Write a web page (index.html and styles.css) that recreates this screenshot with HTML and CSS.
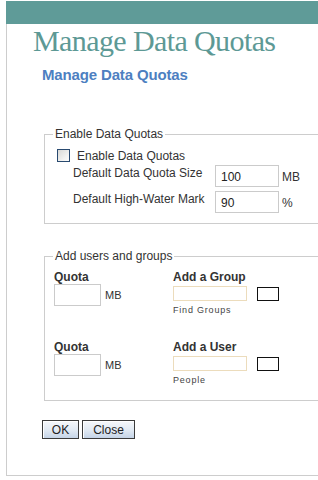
FILE: index.html
```html
<!DOCTYPE html>
<html>
<head>
  <meta charset="utf-8">
  <link rel="stylesheet" href="styles.css">
</head>
<body>
  <div class="topbar"></div>
  <div class="frame">
    <h1 class="page-title">Manage Data Quotas</h1>
    <h2 class="sub-title">Manage Data Quotas</h2>

    <fieldset class="group">
      <legend>Enable Data Quotas</legend>
      <div class="check-row">
        <span class="check"></span>
        <span>Enable Data Quotas</span>
      </div>
      <div class="quota-grid">
        <div class="field-label">Default Data Quota Size</div>
        <div class="text-box">100</div>
        <div class="unit">MB</div>
        <div class="field-label">Default High-Water Mark</div>
        <div class="text-box">90</div>
        <div class="unit">%</div>
      </div>
    </fieldset>

    <fieldset class="group users">
      <legend>Add users and groups</legend>
      <div class="user-row">
        <div class="quota-block">
          <div class="bold-label">Quota</div>
          <div class="quota-line">
            <span class="quota-box"></span>
            <span class="unit-inline">MB</span>
          </div>
        </div>
        <div class="add-block">
          <div class="bold-label">Add a Group</div>
          <div class="find-line">
            <span class="find-box"></span>
            <span class="pick-btn"></span>
          </div>
          <div class="hint">Find Groups</div>
        </div>
      </div>
      <div class="user-row">
        <div class="quota-block">
          <div class="bold-label">Quota</div>
          <div class="quota-line">
            <span class="quota-box"></span>
            <span class="unit-inline">MB</span>
          </div>
        </div>
        <div class="add-block">
          <div class="bold-label">Add a User</div>
          <div class="find-line">
            <span class="find-box"></span>
            <span class="pick-btn"></span>
          </div>
          <div class="hint">People</div>
        </div>
      </div>
    </fieldset>

    <div class="actions">
      <button class="btn btn-ok">OK</button>
      <button class="btn btn-close">Close</button>
    </div>
  </div>
</body>
</html>
```

FILE: styles.css
```css
* {
  box-sizing: border-box;
}

body {
  margin: 0;
  width: 318px;
  height: 480px;
  overflow: hidden;
  background: #fff;
  font-family: "Liberation Sans", Arial, sans-serif;
  font-size: 12px;
  color: #333;
}

.topbar {
  margin: 1px 0 0 6px;
  height: 23px;
  background: #5f9b98;
}

.frame {
  margin-left: 6px;
  height: 452px;
  border-left: 1px solid #cdcdcd;
  border-bottom: 1px solid #cdcdcd;
  overflow: hidden;
}

.page-title {
  margin: 0;
  padding-left: 26px;
  font-family: "Liberation Serif", "Times New Roman", serif;
  font-size: 30px;
  font-weight: normal;
  line-height: 34px;
  letter-spacing: -0.6px;
  color: #5d9995;
  white-space: nowrap;
}

.sub-title {
  margin: 8px 0 0;
  padding-left: 35px;
  font-size: 15px;
  font-weight: bold;
  line-height: 18px;
  letter-spacing: -0.15px;
  color: #4d7fc1;
}

/* fieldsets */
.group {
  margin: 43px 0 0 37px;
  padding: 0 0 10px 8px;
  width: 320px;
  border: 1px solid #cdcdcd;
}

.group legend {
  padding: 0 2px;
  line-height: 14px;
  color: #333;
}

.check-row {
  display: flex;
  align-items: center;
  gap: 7px;
  height: 13px;
  margin: 8px 0 0 4px;
  line-height: 14px;
}

.check {
  width: 13px;
  height: 13px;
  border: 1px solid #294a70;
  background: linear-gradient(135deg, #d9d9d6 0%, #f4f4f2 70%, #fbfbfb 100%);
}

.quota-grid {
  display: grid;
  grid-template-columns: 139px 64px auto;
  column-gap: 3px;
  row-gap: 4px;
  margin: 3px 0 0 20px;
  align-items: start;
}

.field-label {
  margin-top: 1px;
  line-height: 14px;
  white-space: nowrap;
}

.text-box {
  height: 22px;
  padding: 4px 0 0 5px;
  border: 1px solid #cbcbcb;
  line-height: 14px;
  color: #222;
}

.unit {
  margin-top: 5px;
  line-height: 14px;
}

/* users and groups */
.group.users {
  margin-top: 25px;
  padding-bottom: 14px;
}

.user-row {
  display: flex;
  margin: 7px 0 0 1px;
}

.user-row + .user-row {
  margin-top: 24px;
}

.bold-label {
  font-weight: bold;
  line-height: 14px;
  color: #333;
}

.quota-block {
  width: 119px;
}

.quota-line {
  display: flex;
  align-items: center;
  gap: 4px;
}

.quota-box {
  width: 47px;
  height: 22px;
  border: 1px solid #cbcbcb;
}

.unit-inline {
  font-size: 11px;
}

.find-line {
  display: flex;
  align-items: center;
  gap: 10px;
  margin-top: 2px;
}

.find-box {
  width: 74px;
  height: 15px;
  border: 1px solid #ecdcbc;
}

.pick-btn {
  width: 22px;
  height: 14px;
  border: 1px solid #111;
}

.hint {
  margin-top: 4px;
  font-size: 9px;
  line-height: 11px;
  letter-spacing: 0.8px;
  color: #444;
}

/* buttons */
.actions {
  display: flex;
  gap: 3px;
  margin: 19px 0 0 35px;
}

.btn {
  height: 19px;
  padding: 0;
  border: 1px solid #3b3b3b;
  background: linear-gradient(#f6f8fb 0%, #e3ebf4 50%, #c5d4e7 100%);
  box-shadow: inset 1px 1px 0 #fff;
  font-family: "Liberation Sans", Arial, sans-serif;
  font-size: 12px;
  line-height: 16px;
  color: #222;
}

.btn-ok {
  width: 37px;
}

.btn-close {
  width: 53px;
}
```
